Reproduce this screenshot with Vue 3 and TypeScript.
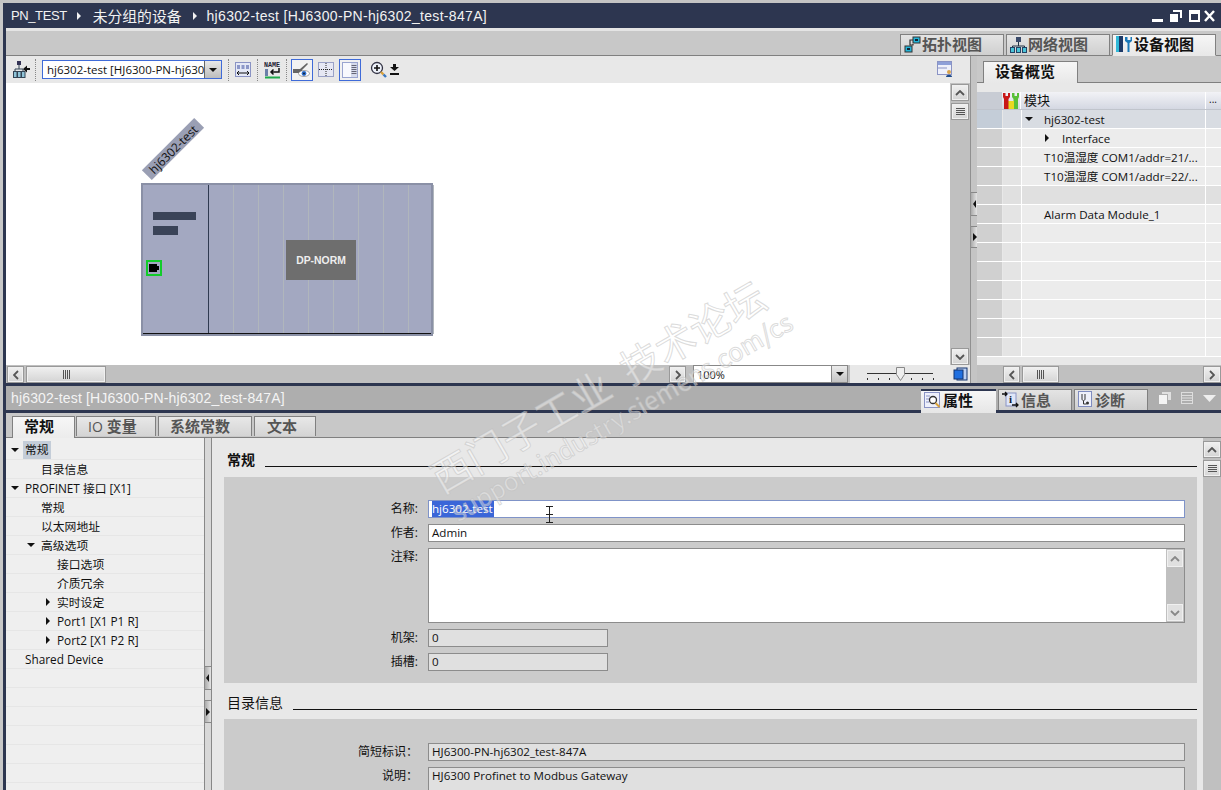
<script setup lang="ts">
interface TreeRow { label: string; indent: number; arrow?: 'down' | 'right'; selected?: boolean }
const tree: TreeRow[] = [
  { label: '常规', indent: 19, arrow: 'down', selected: true },
  { label: '目录信息', indent: 35 },
  { label: 'PROFINET 接口 [X1]', indent: 19, arrow: 'down' },
  { label: '常规', indent: 35 },
  { label: '以太网地址', indent: 35 },
  { label: '高级选项', indent: 35, arrow: 'down' },
  { label: '接口选项', indent: 51 },
  { label: '介质冗余', indent: 51 },
  { label: '实时设定', indent: 51, arrow: 'right' },
  { label: 'Port1 [X1 P1 R]', indent: 51, arrow: 'right' },
  { label: 'Port2 [X1 P2 R]', indent: 51, arrow: 'right' },
  { label: 'Shared Device', indent: 19 },
  { label: '', indent: 5 }, { label: '', indent: 5 }, { label: '', indent: 5 },
  { label: '', indent: 5 }, { label: '', indent: 5 }, { label: '', indent: 5 }
]
const hasCjk = (s: string): boolean => /[^\x00-\x7f]/.test(s)
interface OverRow { label: string; cls: string }
const over: OverRow[] = [
  { label: 'hj6302-test', cls: 'sel' },
  { label: 'Interface', cls: 'sub' },
  { label: 'T10温湿度 COM1/addr=21/...', cls: '' },
  { label: 'T10温湿度 COM1/addr=22/...', cls: '' },
  { label: '', cls: 'blank' },
  { label: 'Alarm Data Module_1', cls: '' },
  { label: '', cls: '' }, { label: '', cls: '' }, { label: '', cls: '' },
  { label: '', cls: '' }, { label: '', cls: '' }, { label: '', cls: '' },
  { label: '', cls: '' }
]
const slots = [0, 1, 2, 3, 4, 5, 6, 7, 8]
const ticks = [0, 1, 2, 3, 4, 5, 6]
</script>

<template>
  <div class="root">
    <div class="topstrip"></div>
    <div class="window">
      <header class="titlebar">
        <span class="crumb c-a">PN_TEST</span><i class="tri-r white"></i>
        <span class="crumb c-b">未分组的设备</span><i class="tri-r white"></i>
        <span class="crumb c-c">hj6302-test [HJ6300-PN-hj6302_test-847A]</span>
        <div class="winbtns">
          <svg width="64" height="14" viewBox="0 0 64 14">
            <rect x="0" y="10" width="11" height="3" fill="#fff" />
            <path d="M18 5h8v8h-8z" fill="#fff" /><path d="M21 3V1h9v8h-2V3z" fill="#fff" />
            <rect x="37" y="1" width="11" height="12" fill="#fff" /><rect x="39" y="5" width="7" height="6" fill="#2d3650" />
            <path d="M53 2l9 10M62 2l-9 10" stroke="#fff" stroke-width="2.4" />
          </svg>
        </div>
      </header>
      <div class="lightline"></div>

      <div class="viewtabs">
        <div class="vtab">
          <svg width="17" height="17" viewBox="0 0 17 17"><rect x="9" y="1" width="7" height="6" fill="#22b4d8" stroke="#333" /><rect x="1" y="10" width="7" height="6" fill="#22b4d8" stroke="#333" /><rect x="11" y="3" width="3" height="2" fill="#123" /><rect x="3" y="12" width="3" height="2" fill="#123" /><path d="M9 4H6v5h3v-1" fill="none" stroke="#333" stroke-width="1.200" /></svg>
          <b>拓扑视图</b>
        </div>
        <div class="vtab">
          <svg width="17" height="17" viewBox="0 0 17 17"><rect x="6" y="1" width="5" height="5" fill="#3a4a6a" /><path d="M8.500 6v4M2.500 12v-2h12v2" fill="none" stroke="#234" /><rect x=".5" y="11.500" width="4" height="5" fill="#4ac4d8" stroke="#246" /><rect x="6.500" y="11.500" width="4" height="5" fill="#4ac4d8" stroke="#246" /><rect x="12.500" y="11.500" width="4" height="5" fill="#4ac4d8" stroke="#246" /></svg>
          <b>网络视图</b>
        </div>
        <div class="vtab active">
          <svg width="17" height="18" viewBox="0 0 17 18"><rect x="0" y="1" width="3" height="16" fill="#30b8d8" /><rect x="3" y="1" width="4" height="16" fill="#1e3a68" /><path d="M9 2v4l2.500 2v9h2V8l2.500-2V2h-1.500v3h-3V2z" fill="#1a78b8" /></svg>
          <b>设备视图</b>
        </div>
      </div>

      <div class="editor">
        <section class="canvaspane">
          <div class="toolbar">
            <svg class="t0" width="18" height="17" viewBox="0 0 18 17"><rect x="4" y="0" width="4" height="4" fill="#335" /><path d="M6 4v4M2 11V8h8v3" stroke="#345" fill="none" /><rect x="0.500" y="10.500" width="3.500" height="6" fill="#8fc4d8" stroke="#345" /><rect x="4.500" y="10.500" width="3.500" height="6" fill="#8fc4d8" stroke="#345" /><rect x="8.500" y="10.500" width="3.500" height="6" fill="#8fc4d8" stroke="#345" /><path d="M17 8h-6" stroke="#111" stroke-width="2" /><path d="M14 4.500 10 8l4 3.500z" fill="#111" /></svg>
            <i class="sep"></i>
            <div class="devcombo">
              <span class="devtext">hj6302-test [HJ6300-PN-hj630</span>
              <span class="devbtn"><i class="tri-d"></i></span>
            </div>
            <i class="sep s2"></i>
            <svg class="t1" width="16" height="17" viewBox="0 0 16 17"><rect x="0.500" y="1.500" width="15" height="14" fill="#e4e8f6" stroke="#8a93c4" /><rect x="2" y="4" width="3" height="4" fill="#8c97c8" /><rect x="6.500" y="4" width="3" height="4" fill="#8c97c8" /><rect x="11" y="4" width="3" height="4" fill="#8c97c8" /><path d="M2 12h12M2 12l2-2M2 12l2 2M14 12l-2-2M14 12l-2 2" stroke="#111" fill="none" /></svg>
            <i class="sep s3"></i>
            <svg class="t2" width="17" height="18" viewBox="0 0 17 18"><text x="0" y="6" font-size="7" font-weight="700" font-family="Liberation Mono" fill="#223" textLength="16" lengthAdjust="spacingAndGlyphs">NAME</text><rect x="1" y="8" width="3" height="7" fill="#6a7fa8" /><path d="M15 7v4H7M9.500 8.500 7 11l2.500 2.500" stroke="#111" fill="none" stroke-width="1.500" /><rect x="1" y="15.500" width="15" height="2" fill="#1faa4a" /></svg>
            <i class="sep s4"></i>
            <span class="tbtn on">
              <svg width="18" height="15" viewBox="0 0 18 15"><path d="M0 7h7l7-6 1 1-6 6v3H0z" fill="#666" /><ellipse cx="11" cy="11.500" rx="5.500" ry="3" fill="#fff" stroke="#555" stroke-width=".5" /><circle cx="11" cy="11.500" r="2.400" fill="#2d6fd0" /><circle cx="11" cy="11.500" r="1" fill="#123" /></svg>
            </span>
            <svg class="t3" width="16" height="17" viewBox="0 0 16 17"><rect x="0.500" y="1.500" width="15" height="14" fill="#e6e8f4" stroke="#9aa2c8" /><path d="M1 8.500h14M8 2v13" stroke="#222" stroke-dasharray="1 1" /></svg>
            <span class="tbtn on t4">
              <svg width="16" height="16" viewBox="0 0 16 16"><rect x="0.500" y="0.500" width="15" height="15" fill="#f8f9fe" stroke="#9aa5d0" /><rect x="9" y="1" width="6" height="14" fill="#d6dbec" /><path d="M9.500 3.500h5M9.500 5.500h5M9.500 7.500h5M9.500 9.500h5M9.500 11.500h5" stroke="#667" /></svg>
            </span>
            <svg class="t5" width="17" height="18" viewBox="0 0 17 18"><circle cx="7" cy="7" r="5.500" fill="#eef2fa" stroke="#334" stroke-width="1.300" /><path d="M4 7h6M7 4v6" stroke="#111" stroke-width="1.600" /><path d="M11 11l2.500 2.500" stroke="#d9a13a" stroke-width="2.400" /><path d="M13.500 13.500l2.500 2.500" stroke="#3a78c0" stroke-width="2.400" /></svg>
            <svg class="t6" width="9" height="11" viewBox="0 0 9 11"><path d="M3 0h3v3h3L4.500 7 0 3h3z" fill="#111" /><rect x="0" y="9" width="9" height="2" fill="#111" /></svg>
            <svg class="t7" width="16" height="17" viewBox="0 0 16 17"><rect x="0.500" y="0.500" width="14" height="13" fill="#eef0fa" stroke="#8a93c4" /><rect x="1" y="1" width="13" height="3" fill="#8ea0d8" /><path d="M1 7h9" stroke="#8a93c4" /><circle cx="12" cy="11" r="2" fill="#d8a24a" /><path d="M9 16c0-3 6-3 6 0z" fill="#1d4a8a" /></svg>
          </div>

          <div class="canvasbody">
            <div class="canvas">
              <div class="devlabel"><span>hj6302-test</span></div>
              <div class="device">
                <div class="devhead">
                  <i class="b1"></i><i class="b2"></i>
                  <span class="port"><svg width="10" height="8" viewBox="0 0 10 8"><path d="M0 0h8v2h2v4H8v2H0z" fill="#000" /></svg></span>
                </div>
                <div class="devslots">
                  <i v-for="s in slots" :key="s"></i>
                  <div class="norm">DP-NORM</div>
                </div>
              </div>
            </div>
            <div class="vscroll">
              <span class="sbtn up"><svg width="10" height="6" viewBox="0 0 10 6"><path d="M1 5l4-4 4 4" fill="none" stroke="#555" stroke-width="1.800" /></svg></span>
              <span class="sbtn grip"><svg width="9" height="7" viewBox="0 0 9 7"><path d="M0 .5h9M0 2.500h9M0 4.500h9M0 6.500h9" stroke="#555" /></svg></span>
              <span class="grow"></span>
              <span class="sbtn up"><svg width="10" height="6" viewBox="0 0 10 6"><path d="M1 1l4 4 4-4" fill="none" stroke="#555" stroke-width="1.800" /></svg></span>
            </div>
          </div>

          <div class="statusrow">
            <div class="hscroll">
              <span class="sbtn h l"><svg width="6" height="10" viewBox="0 0 6 10"><path d="M5 1 1 5l4 4" fill="none" stroke="#555" stroke-width="1.800" /></svg></span>
              <span class="sbtn thumb"><svg width="7" height="9" viewBox="0 0 7 9"><path d="M.5 0v9M2.500 0v9M4.500 0v9M6.500 0v9" stroke="#555" /></svg></span>
              <span class="grow"></span>
              <span class="sbtn h"><svg width="6" height="10" viewBox="0 0 6 10"><path d="M1 1l4 4-4 4" fill="none" stroke="#555" stroke-width="1.800" /></svg></span>
            </div>
            <div class="zoomcombo"><span>100%</span><span class="zbtn"><i class="tri-d"></i></span></div>
            <div class="slider">
              <i class="rail"></i>
              <i v-for="t in ticks" :key="t" class="tick" :style="{ left: 5 + t * 11 + 'px' }"></i>
              <svg class="thumbicon" width="9" height="14" viewBox="0 0 9 14"><path d="M.5.500h8v7l-4 6-4-6z" fill="#eee" stroke="#888" /></svg>
            </div>
            <div class="corner"><svg width="15" height="15" viewBox="0 0 15 15"><rect x="4" y="1" width="10" height="12" fill="#bcd0f2" stroke="#14346f" /><rect x="1" y="3" width="9" height="9" fill="#1f6fe0" stroke="#14346f" /></svg></div>
          </div>
        </section>

        <div class="splitter">
          <span class="spacer1"></span>
          <span class="sp"><i class="tri-l"></i></span>
          <span class="sp2"><i class="tri-r"></i></span>
        </div>

        <section class="overview">
          <div class="ovtabs"><div class="ovtab">设备概览</div></div>
          <div class="ovgap"></div>
          <div class="ovhead">
            <span class="c1"></span>
            <span class="c2"><svg width="16" height="16" viewBox="0 0 16 16"><path d="M9 0v4l1.500 2v10H15V6l1-2V0h-2v3h-2.500V0z" fill="#58c038" /><path d="M5 8h6v8H5z" fill="#e8d820" /><path d="M0 0v4l1 2v10h4.500V6L7 4V0H5v3H2.500V0z" fill="#c81818" /></svg></span>
            <span class="c3">模块</span>
            <span class="c4">...</span>
          </div>
          <div v-for="(r, i) in over" :key="i" class="ovrow" :class="r.cls">
            <span class="c1"></span><span class="c2"></span>
            <span class="c3">
              <i v-if="r.cls === 'sel'" class="tri-d ovd"></i>
              <i v-if="r.cls === 'sub'" class="tri-r ovr"></i>
              {{ r.label }}
            </span>
            <span class="c4"></span>
          </div>
          <div class="grow"></div>
          <div class="ovscroll">
            <span class="sbtn h"><svg width="6" height="10" viewBox="0 0 6 10"><path d="M5 1 1 5l4 4" fill="none" stroke="#555" stroke-width="1.800" /></svg></span>
            <span class="sbtn othumb"><svg width="7" height="9" viewBox="0 0 7 9"><path d="M.5 0v9M2.500 0v9M4.500 0v9M6.500 0v9" stroke="#555" /></svg></span>
            <span class="grow"></span>
            <span class="sbtn h"><svg width="6" height="10" viewBox="0 0 6 10"><path d="M1 1l4 4-4 4" fill="none" stroke="#555" stroke-width="1.800" /></svg></span>
          </div>
        </section>
      </div>

      <div class="darkline"></div>
      <div class="inspbar">
        <span class="insptitle">hj6302-test [HJ6300-PN-hj6302_test-847A]</span>
        <div class="insptabs">
          <div class="itab active">
            <svg width="17" height="17" viewBox="0 0 17 17"><rect x="0.500" y="0.500" width="15" height="15" fill="#eef0fa" stroke="#8a93c4" /><path d="M2 4h4M2 7h3M2 10h3" stroke="#8a93c4" /><circle cx="9" cy="8" r="3.500" fill="#fff" stroke="#333" stroke-width="1.300" /><path d="M11.500 11l4 4" stroke="#d9a13a" stroke-width="2" /></svg>
            <b>属性</b>
          </div>
          <div class="itab">
            <svg width="17" height="17" viewBox="0 0 17 17"><rect x="4" y="2" width="10" height="13" fill="#dfe6f8" stroke="#8a93c4" /><path d="M0 3h5M3 1l2 2-2 2" stroke="#111" fill="none" stroke-width="1.300" /><text x="7" y="12" font-size="11" font-weight="700" fill="#123" font-family="Liberation Serif">i</text><path d="M10 14h6M14 12l2 2-2 2" stroke="#111" fill="none" stroke-width="1.300" /></svg>
            <b>信息</b>
          </div>
          <div class="itab">
            <svg width="15" height="17" viewBox="0 0 15 17"><rect x="0.500" y="0.500" width="13" height="15" fill="#eef0fa" stroke="#7f8cc0" /><path d="M4 3v5c0 2 3 2 3 0V3M5.500 10v3h3" fill="none" stroke="#333" /><circle cx="9.500" cy="12" r="1.500" fill="#333" /></svg>
            <b>诊断</b>
          </div>
        </div>
        <div class="inspicons">
          <svg width="12" height="12" viewBox="0 0 12 12"><rect x="0" y="3" width="8" height="9" fill="#f4f4f4" /><path d="M3 2V0h9v8h-3V2z" fill="#e0e0e0" /></svg>
          <svg width="12" height="12" viewBox="0 0 12 12"><rect x=".5" y=".5" width="11" height="11" fill="none" stroke="#ddd" /><path d="M1 3.500h10M1 6h10M1 8.500h10" stroke="#ddd" /></svg>
          <svg width="13" height="7" viewBox="0 0 13 7"><path d="M0 0h13L6.500 7z" fill="#eee" /></svg>
        </div>
      </div>
      <div class="darkline2"></div>

      <div class="subtabs">
        <div class="stab active">常规</div>
        <div class="stab w1"><span class="lt">IO</span> 变量</div>
        <div class="stab w2">系统常数</div>
        <div class="stab w3">文本</div>
      </div>

      <div class="inspbody">
        <nav class="tree">
          <div v-for="(r, i) in tree" :key="i" class="trow">
            <span class="tinner" :style="{ paddingLeft: r.indent + 'px' }">
              <i v-if="r.arrow === 'down'" class="tri-d tarrow"></i>
              <i v-if="r.arrow === 'right'" class="tri-r tarrow tr"></i>
              <span :class="{ selected: r.selected, up1: hasCjk(r.label) && !r.selected }">{{ r.label }}</span>
            </span>
          </div>
        </nav>
        <div class="treesplit">
          <span class="spacer2"></span>
          <span class="sp"><i class="tri-l"></i></span>
          <span class="sp3"><i class="tri-r"></i></span>
        </div>
        <main class="content">
          <div class="sechead first"><b>常规</b><i></i></div>
          <div class="panel p1">
            <div class="field"><label>名称:</label><div class="inp focus"><span class="selection">hj6302-test</span></div></div>
            <div class="field"><label>作者:</label><div class="inp">Admin</div></div>
            <div class="field"><label>注释:</label>
              <div class="area">
                <div class="areascroll">
                  <span class="asb"><svg width="10" height="6" viewBox="0 0 10 6"><path d="M1 5l4-4 4 4" fill="none" stroke="#888" stroke-width="1.800" /></svg></span>
                  <span class="grow"></span>
                  <span class="asb"><svg width="10" height="6" viewBox="0 0 10 6"><path d="M1 1l4 4 4-4" fill="none" stroke="#888" stroke-width="1.800" /></svg></span>
                </div>
              </div>
            </div>
            <div class="field"><label>机架:</label><div class="inp ro short">0</div></div>
            <div class="field"><label>插槽:</label><div class="inp ro short">0</div></div>
          </div>
          <div class="sechead"><span>目录信息</span><i></i></div>
          <div class="panel p2">
            <div class="field"><label>简短标识：</label><div class="inp ro">HJ6300-PN-hj6302_test-847A</div></div>
            <div class="field"><label>说明：</label><div class="inp ro tall">HJ6300 Profinet to Modbus Gateway</div></div>
          </div>
        </main>
        <div class="mainscroll">
          <span class="sbtn up m"><svg width="10" height="6" viewBox="0 0 10 6"><path d="M1 5l4-4 4 4" fill="none" stroke="#555" stroke-width="1.800" /></svg></span>
          <span class="sbtn grip m"><svg width="9" height="7" viewBox="0 0 9 7"><path d="M0 .5h9M0 2.500h9M0 4.500h9M0 6.500h9" stroke="#555" /></svg></span>
        </div>
      </div>
    </div>

    <div class="watermark">
      <div class="wm1">西门子工业&nbsp;&nbsp;技术论坛</div>
      <div class="wm2">support.industry.siemens.com/cs</div>
    </div>
    <svg class="ibeam" width="9" height="17" viewBox="0 0 9 17"><path d="M1 .5h7M1 16.500h7M4.500 1v15M1 8.500h7" stroke="#222" fill="none" /></svg>
  </div>
</template>

<style scoped>
.root { position: relative; width: 1221px; height: 790px; overflow: hidden; background: #c8c8c8; font-family: "Open Sans", "Noto Sans CJK SC", sans-serif; font-size: 11px; color: #111; }
.topstrip { height: 3px; background: #c4c4c4; border-bottom: 0; }
.window { height: 787px; margin-left: 3px; border-left: 3px solid #2d3650; display: flex; flex-direction: column; background: #c8c8c8; }
.grow { flex: 1; }
i { display: block; font-style: normal; }

.titlebar { height: 25px; flex: none; background: #2d3650; color: #f2f2f2; display: flex; align-items: center; padding-left: 5px; font-family: "Liberation Sans", "Noto Sans CJK SC", sans-serif; font-size: 14px; }
.crumb { white-space: nowrap; }
.c-a { font-size: 13px; letter-spacing: -0.4px; }
.c-b { font-size: 14.800px; margin-left: 2px; margin-right: 1px; }
.c-c { letter-spacing: 0.32px; }
.tri-r { width: 0; height: 0; border-left: 4px solid #111; border-top: 4px solid transparent; border-bottom: 4px solid transparent; }
.tri-r.white { border-left-color: #f2f2f2; margin: 0 10px; }
.tri-l { width: 0; height: 0; border-right: 3px solid #111; border-top: 4px solid transparent; border-bottom: 4px solid transparent; }
.tri-d { width: 0; height: 0; border-top: 4px solid #111; border-left: 4px solid transparent; border-right: 4px solid transparent; }
.winbtns { margin-left: auto; margin-right: 5px; display: flex; }
.lightline { height: 3px; flex: none; background: #e4e4e4; }

.viewtabs { height: 25px; flex: none; box-sizing: border-box; display: flex; justify-content: flex-end; align-items: flex-end; gap: 2px; padding-right: 5px; border-bottom: 1px solid #808080; }
.vtab { width: 104px; height: 21px; box-sizing: border-box; border: 1px solid #808080; border-bottom: 0; display: flex; align-items: center; gap: 1px; padding: 0 0 2px 3px; background: linear-gradient(#e4e4e4, #cfcfcf); }
.vtab b { font-size: 15px; color: #555; font-weight: 700; white-space: nowrap; line-height: 18px; }
.vtab.active { background: linear-gradient(#f6f6f6, #e8e8e8); height: 22px; margin-bottom: -1px; border-bottom: 1px solid #e8e8e8; padding-bottom: 3px; }
.vtab.active b { color: #111; }

.editor { height: 327px; flex: none; display: flex; }
.canvaspane { width: 964px; flex: none; display: flex; flex-direction: column; }
.toolbar { height: 27px; flex: none; background: #e8e8e8; position: relative; display: flex; align-items: center; padding-left: 7px; }
.sep { width: 0; height: 22px; border-left: 1px dotted #888; margin: 0 6px 0 4px; }
.devcombo { width: 180px; height: 19px; box-sizing: border-box; border: 1px solid #3f6bd8; background: #fff; display: flex; align-items: center; overflow: hidden; }
.devtext { flex: 1; white-space: nowrap; padding-left: 4px; font-size: 11.500px; }
.devbtn { width: 16px; height: 17px; display: flex; align-items: center; justify-content: center; background: linear-gradient(#e8e8e8, #bdbdbd); border-left: 1px solid #666; flex: none; }
.s2 { margin: 0 6px 0 6px; }
.s3 { margin: 0 6px 0 6px; }
.s4 { margin: 0 4px 0 5px; }
.tbtn { width: 22px; height: 22px; box-sizing: border-box; border: 1px solid #3f6bd8; background: #f2f2f2; display: flex; align-items: center; justify-content: center; }
.t3 { margin: 0 5px; }
.t5 { margin-left: 9px; }
.t6 { margin-left: 3px; }
.t7 { margin-left: auto; margin-right: 17px; }

.canvasbody { flex: 1; display: flex; min-height: 0; }
.canvas { flex: 1; background: #fff; position: relative; }
.vscroll { width: 20px; flex: none; background: #c0c0c0; display: flex; flex-direction: column; align-items: center; padding-top: 1px; gap: 2px; }
.sbtn { display: flex; align-items: center; justify-content: center; box-sizing: border-box; border: 1px solid #999; outline: 1px solid #f0f0f0; outline-offset: -2px; background: linear-gradient(#f0f0f0, #d4d4d4); flex: none; }
.sbtn.up, .sbtn.grip { width: 18px; height: 17px; }
.sbtn.h { width: 17px; height: 17px; }
.sbtn.l { margin-left: 1px; }
.sbtn.thumb { width: 80px; height: 17px; margin-left: 2px; }
.sbtn.othumb { width: 37px; height: 17px; margin-left: 2px; }
.ovscroll .sbtn.h:last-child { width: 18px; }

.devlabel { position: absolute; left: 130px; top: 59px; width: 74px; height: 14px; background: #9a9fb4; transform: rotate(-45deg); display: flex; align-items: center; justify-content: center; font-size: 12px; white-space: nowrap; color: #111; }
.device { position: absolute; left: 135px; top: 100px; width: 292px; height: 153px; box-sizing: border-box; border: 2px solid #8a90a6; background: #a3a8c1; display: flex; }
.device::after { content: ""; position: absolute; left: 0; right: 0; bottom: 0; height: 1px; background: #111; }
.devhead { width: 65px; flex: none; border-right: 1px solid #2f3a50; position: relative; }
.b1 { position: absolute; left: 10px; top: 27px; width: 43px; height: 8px; background: #3a4358; }
.b2 { position: absolute; left: 10px; top: 41px; width: 25px; height: 9px; background: #3a4358; }
.port { position: absolute; left: 3px; top: 75px; width: 16px; height: 16px; box-sizing: border-box; border: 2px solid #12cc2a; display: flex; align-items: center; justify-content: center; }
.devslots { flex: 1; display: flex; position: relative; }
.devslots i { width: 25px; box-sizing: border-box; border-right: 1px solid #b0b6bc; }
.norm { position: absolute; left: 77px; top: 55px; width: 70px; height: 40px; background: #6e6e6e; color: #eee; font-family: "Liberation Sans", sans-serif; font-size: 10.400px; font-weight: 700; display: flex; align-items: center; justify-content: center; }

.statusrow { height: 18px; flex: none; display: flex; background: #c0c0c0; }
.hscroll { width: 680px; flex: none; display: flex; padding-top: 1px; }
.zoomcombo { width: 155px; height: 18px; margin-left: 7px; box-sizing: border-box; border: 1px solid #888; background: #fff; display: flex; align-items: center; justify-content: space-between; padding-left: 3px; font-size: 11px; flex: none; }
.zbtn { width: 15px; height: 16px; background: linear-gradient(#ececec, #c4c4c4); border-left: 1px solid #888; display: flex; align-items: center; justify-content: center; }
.slider { flex: 1; background: #e8e8e8; position: relative; margin-left: 2px; }
.rail { position: absolute; left: 17px; width: 66px; top: 8px; height: 1px; background: #333; }
.tick { position: absolute; top: 13px; width: 1px; height: 2px; background: #333; margin-left: 12px; }
.thumbicon { position: absolute; left: 46px; top: 2px; }
.corner { width: 20px; background: #e8e8e8; display: flex; align-items: center; justify-content: center; flex: none; }

.splitter { width: 7px; flex: none; box-sizing: border-box; border-left: 1px solid #909090; background: #c4c4c4; display: flex; flex-direction: column; }
.spacer1 { height: 136px; flex: none; }
.sp, .sp2, .sp3 { flex: none; box-sizing: border-box; background: linear-gradient(90deg, #aaa, #e4e4e4); border-top: 1px solid #888; border-bottom: 1px solid #888; display: flex; align-items: center; justify-content: flex-start; padding-left: 2px; }
.sp { height: 24px; }
.sp2 { margin-top: 10px; height: 22px; }

.overview { flex: 1; min-width: 0; display: flex; flex-direction: column; background: #e8e8e8; }
.ovtabs { height: 27px; flex: none; background: #c8c8c8; border-bottom: 1px solid #808080; display: flex; align-items: flex-end; padding-left: 6px; box-sizing: border-box; }
.ovtab { width: 95px; height: 22px; box-sizing: border-box; border: 1px solid #808080; border-bottom: 0; background: linear-gradient(#f6f6f6, #e8e8e8); margin-bottom: -1px; font-size: 15px; font-weight: 700; padding-left: 11px; line-height: 18px; color: #111; }
.ovgap { height: 9px; flex: none; }
.ovhead { height: 18px; flex: none; display: flex; background: linear-gradient(#f2f2f6, #d4d8e2); border-bottom: 1px solid #c0c4cc; box-sizing: border-box; }
.c1 { width: 25px; flex: none; background: #d0d0d0; }
.ovhead .c1 { background: #c8ccd4; }
.c2 { width: 18px; flex: none; border-left: 1px solid #e8e8e8; box-sizing: content-box; display: flex; align-items: center; }
.c3 { width: 184px; flex: none; border-left: 1px solid #fff; box-sizing: border-box; padding-left: 22px; white-space: nowrap; display: flex; align-items: center; font-size: 11.600px; overflow: hidden; }
.c4 { flex: 1; border-left: 1px solid #fff; }
.ovhead .c3 { padding: 0 0 2px 3px; font-size: 13px; width: 185px; }
.ovhead .c4 { font-size: 10px; line-height: 14px; padding-left: 3px; }
.ovhead .c2 { border-left: 0; width: 18px; padding-left: 1px; box-sizing: border-box; }
.ovrow { height: 19px; flex: none; display: flex; background: #ececec; box-sizing: border-box; border-bottom: 1px solid #fff; }
.ovrow .c2 { background: #e4e4e4; }
.ovrow.sel { background: #d8dce2; }
.ovrow.sel .c1 { background: #c4cdd8; }
.ovrow.sel .c2 { background: #d8dce2; }
.ovrow.sub .c3 { padding-left: 40px; }
.ovrow.blank { background: #e0e0e0; }
.ovrow.blank .c2 { background: #e0e0e0; }
.ovd { margin-left: -19px; margin-right: 11px; }
.ovr { margin-left: -17px; margin-right: 13px; }
.ovscroll { height: 18px; flex: none; display: flex; background: #c0c0c0; padding: 1px 0 0 26px; box-sizing: border-box; }

.darkline { height: 3px; flex: none; background: #2d3650; }
.inspbar { height: 24px; flex: none; background: #aeaeae; display: flex; align-items: flex-end; position: relative; }
.insptitle { font-family: "Liberation Sans", sans-serif; font-size: 14px; color: #f4f4f4; position: absolute; left: 5px; top: 4px; letter-spacing: 0.15px; white-space: nowrap; }
.insptabs { display: flex; gap: 2px; margin-left: 915px; }
.itab { width: 74px; height: 21px; box-sizing: border-box; border: 1px solid #808080; border-bottom: 0; background: linear-gradient(#e4e4e4, #cfcfcf); display: flex; align-items: center; gap: 2px; padding: 0 0 1px 3px; }
.itab b { font-size: 15px; color: #555; white-space: nowrap; line-height: 18px; }
.itab.active { width: 75px; height: 24px; border: 0; border-top: 2px solid #2d3650; background: linear-gradient(#f6f6f6, #e6e6e6); margin-bottom: -3px; position: relative; z-index: 1; padding-bottom: 4px; }
.itab.active b { color: #111; }
.inspicons { position: absolute; right: 5px; top: 6px; display: flex; align-items: center; gap: 10px; }
.darkline2 { height: 3px; flex: none; background: #2d3650; }

.subtabs { height: 25px; flex: none; display: flex; align-items: flex-end; gap: 2px; padding-left: 6px; border-bottom: 1px solid #808080; box-sizing: border-box; }
.stab { width: 63px; height: 20px; box-sizing: border-box; border: 1px solid #808080; border-bottom: 0; margin-bottom: 1px; padding-left: 11px; font-size: 15px; font-weight: 700; color: #555; line-height: 18px; white-space: nowrap; background: linear-gradient(#e8e8e8, #d4d4d4); }
.stab.active { height: 22px; margin-bottom: -1px; background: linear-gradient(#f6f6f6, #ececec); color: #111; margin-right: -1px; }
.stab.w1 { width: 80px; }
.stab.w2 { width: 94px; }
.stab.w3 { width: 62px; padding-left: 12px; }
.lt { font-weight: 400; font-size: 14px; }

.inspbody { flex: 1; min-height: 0; display: flex; background: #e8e8e8; }
.tree { width: 198px; flex: none; background: #efefef; padding-top: 3px; overflow: hidden; }
.trow { height: 19px; box-sizing: border-box; border-bottom: 1px solid #e6e6e6; display: flex; }
.tinner { display: flex; align-items: center; white-space: nowrap; font-size: 11.800px; position: relative; height: 18px; }
.tarrow { position: absolute; margin-left: -14px; }
.tr { margin-left: -11px; }
.up1 { margin-bottom: 2px; }
.selected { background: #c4cdd8; padding: 0 2px 2px; margin-left: -2px; line-height: 16px; }
.treesplit { width: 8px; flex: none; box-sizing: border-box; border-left: 1px solid #888; border-right: 1px solid #888; background: #d8d8d8; display: flex; flex-direction: column; }
.spacer2 { height: 228px; flex: none; }
.treesplit .sp { padding-left: 1px; }
.sp3 { margin-top: 10px; height: 23px; padding-left: 1px; }
.content { flex: 1; min-width: 0; padding-left: 12px; padding-right: 6px; }
.sechead { height: 36px; display: flex; align-items: flex-end; gap: 10px; }
.sechead.first { height: 39px; }
.sechead b, .sechead span { font-size: 14px; line-height: 20px; color: #111; padding-left: 3px; margin-bottom: 6px; }
.sechead.first b { margin-bottom: 7px; }
.sechead span { font-weight: 400; }
.sechead i { flex: 1; height: 1px; background: #111; margin-bottom: 9px; }
.sechead.first i { margin-bottom: 10px; }
.panel { background: #cbcbcb; display: flex; flex-direction: column; gap: 6px; }
.p1 { padding-top: 23px; height: 206px; box-sizing: border-box; }
.p2 { padding-top: 24px; }
.field { display: flex; align-items: flex-start; }
.field label { width: 204px; padding-right: 10px; flex: none; box-sizing: border-box; text-align: right; font-size: 12px; line-height: 18px; }
.inp { width: 757px; height: 18px; box-sizing: border-box; border: 1px solid #8c8c8c; background: #fff; padding-left: 3px; line-height: 16px; font-size: 11.600px; white-space: nowrap; }
.inp.focus { border-color: #7f93c8; }
.selection { background: #3a66d8; color: #fff; display: inline-block; height: 16px; padding-right: 1px; }
.inp.ro { background: #e0e0e0; }
.short { width: 180px; }
.tall { height: 40px; }
.area { width: 757px; height: 75px; box-sizing: border-box; border: 1px solid #8c8c8c; background: #fff; display: flex; justify-content: flex-end; }
.areascroll { width: 18px; background: #c0c0c0; display: flex; flex-direction: column; }
.asb { height: 17px; width: 16px; margin: 1px; background: #e0e0e0; box-sizing: border-box; border: 1px solid #f0f0f0; display: flex; align-items: center; justify-content: center; flex: none; }
.mainscroll { width: 18px; flex: none; background: #c0c0c0; display: flex; flex-direction: column; gap: 2px; padding-top: 3px; }
.sbtn.m { width: 18px; height: 17px; }

.watermark { position: absolute; left: 460px; top: 450px; width: 400px; transform: rotate(-30deg); transform-origin: 0 100%; pointer-events: none; font-family: "Noto Sans CJK SC", "Open Sans", sans-serif; }
.wm1 { font-size: 40px; font-weight: 400; white-space: nowrap; color: rgba(255, 255, 255, 0.45); -webkit-text-stroke: 1px rgba(190, 190, 190, 0.55); line-height: 46px; }
.wm2 { font-size: 25px; white-space: nowrap; color: rgba(255, 255, 255, 0.4); -webkit-text-stroke: 1px rgba(190, 190, 190, 0.55); line-height: 30px; }
.ibeam { position: absolute; left: 545px; top: 506px; }
</style>
